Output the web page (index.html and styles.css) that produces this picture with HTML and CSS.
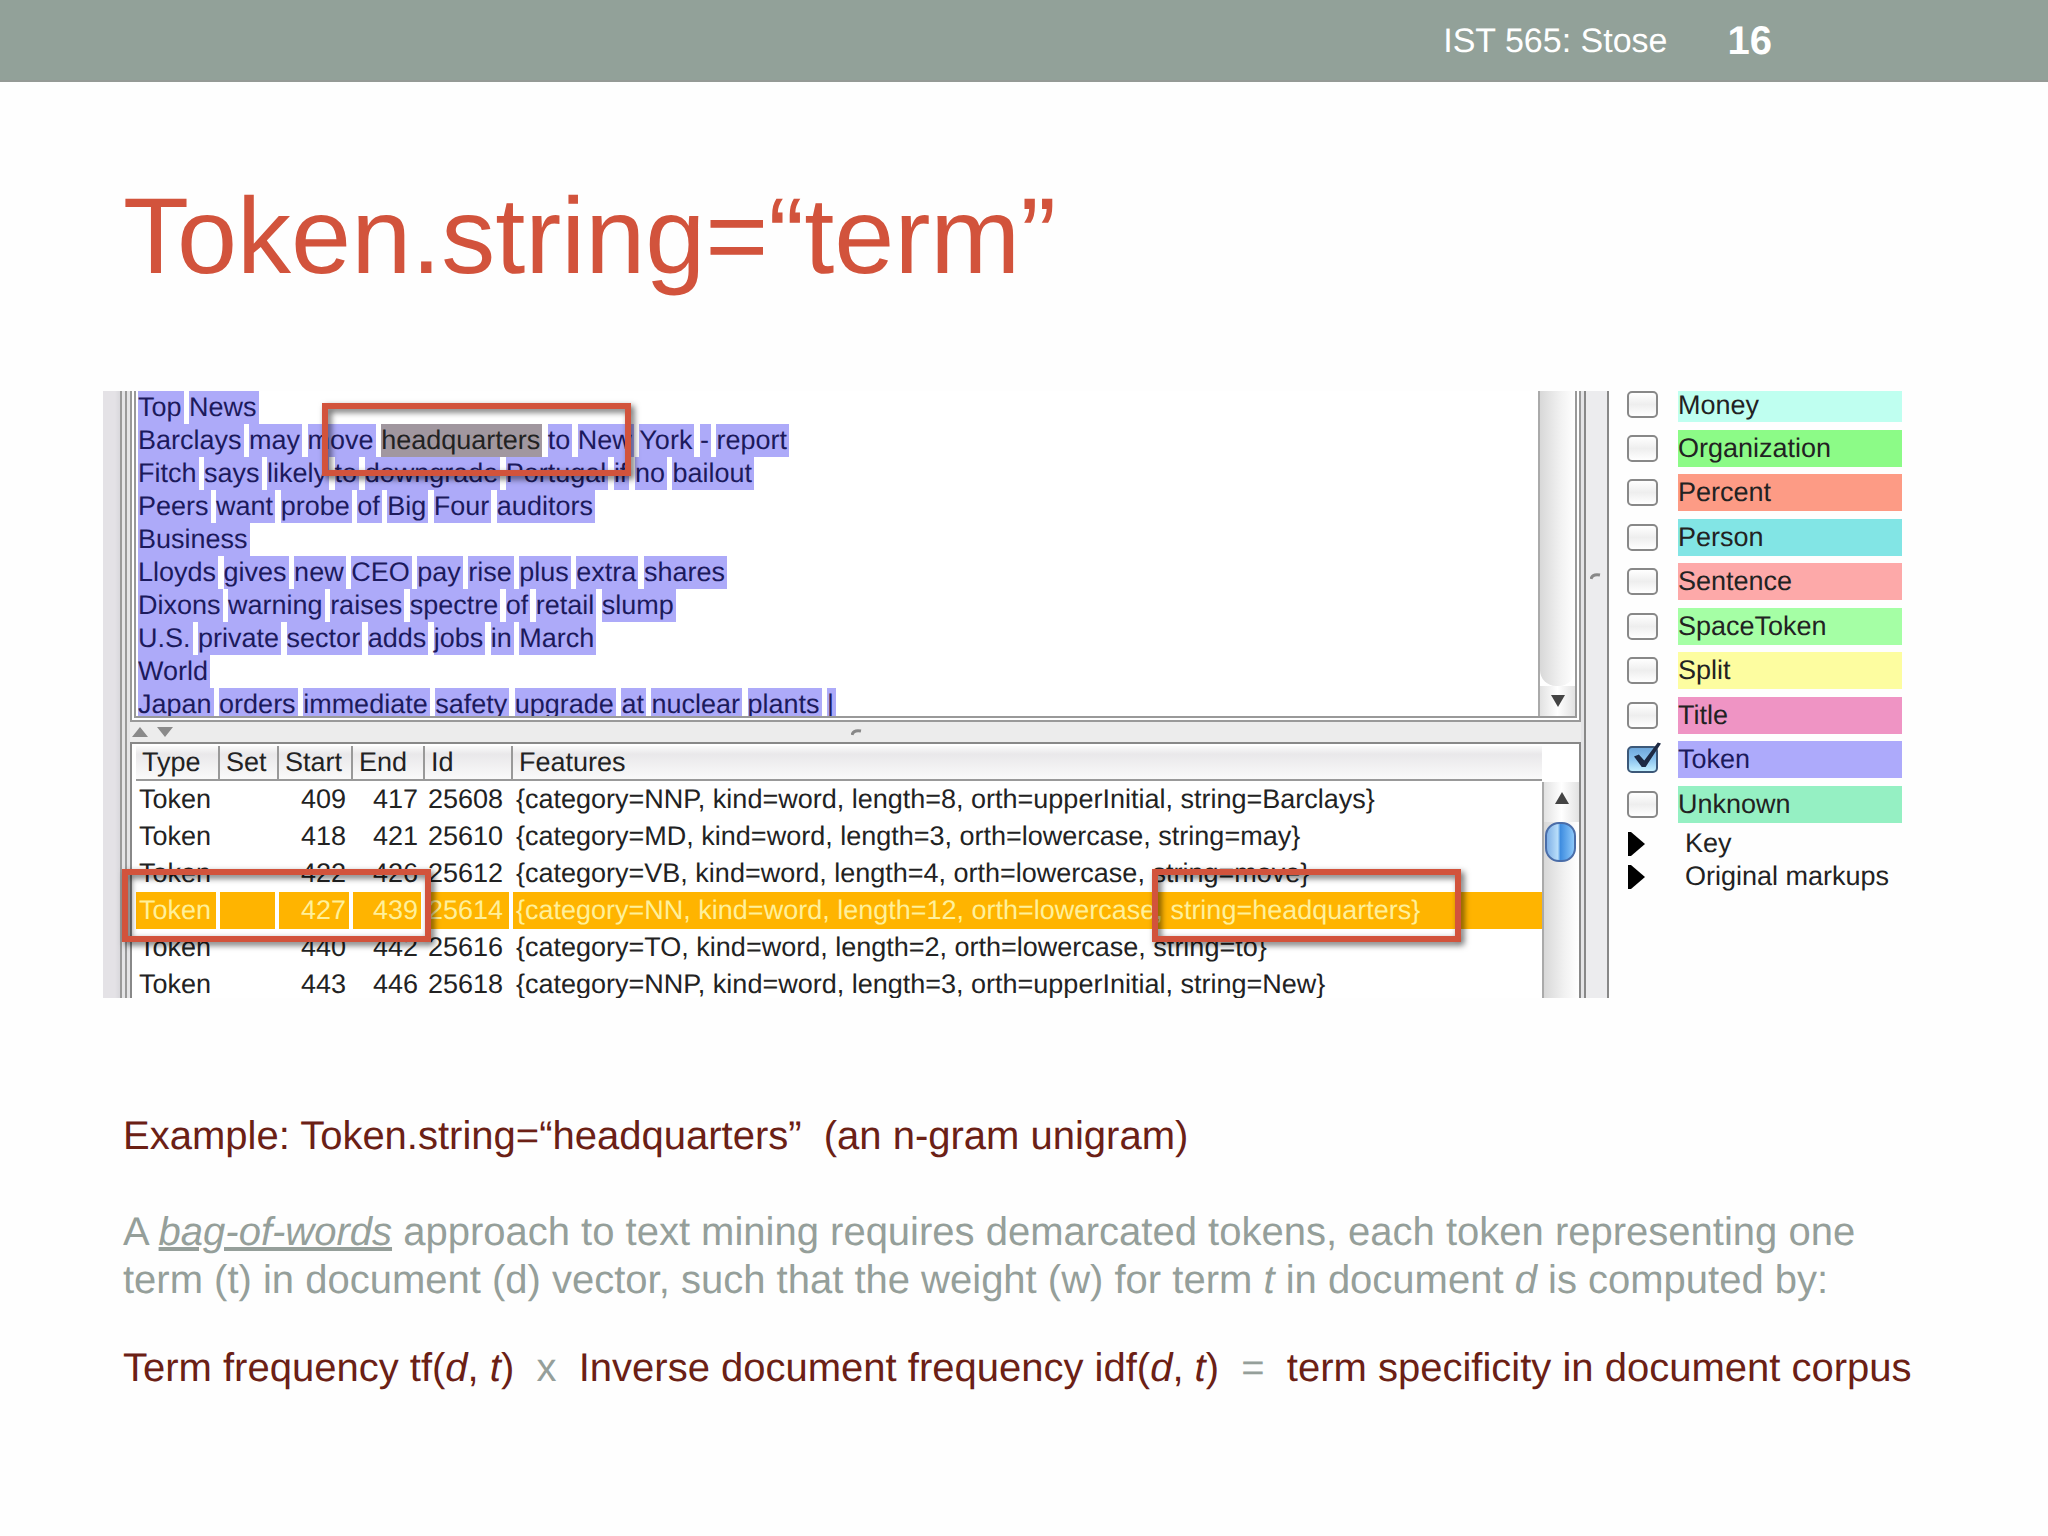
FILE: index.html
```html
<!DOCTYPE html>
<html lang="en">
<head>
    <meta charset="UTF-8">
    <meta name="viewport" content="width=device-width, initial-scale=1.0">
    <title>Token.string=“term”</title>
    <link rel="stylesheet" href="styles.css">
</head>
<body>
    <header class="slide-bar">
        <span class="course">IST 565: Stose</span>
        <span class="page-number">16</span>
    </header>

    <main>
        <h1>Token.string=“term”</h1>

        <section class="gate">
            <div class="left-edge"></div>

            <div class="document">
                <div class="editor">
                    <div class="editor-text">
                        <p><span>Top</span> <span>News</span></p>
                        <p><span>Barclays</span> <span>may</span> <span>move</span> <span class="picked">headquarters</span> <span>to</span> <span>New</span> <span>York</span> <span>-</span> <span>report</span></p>
                        <p><span>Fitch</span> <span>says</span> <span>likely</span> <span>to</span> <span>downgrade</span> <span>Portugal</span> <span>if</span> <span>no</span> <span>bailout</span></p>
                        <p><span>Peers</span> <span>want</span> <span>probe</span> <span>of</span> <span>Big</span> <span>Four</span> <span>auditors</span></p>
                        <p><span>Business</span></p>
                        <p><span>Lloyds</span> <span>gives</span> <span>new</span> <span>CEO</span> <span>pay</span> <span>rise</span> <span>plus</span> <span>extra</span> <span>shares</span></p>
                        <p><span>Dixons</span> <span>warning</span> <span>raises</span> <span>spectre</span> <span>of</span> <span>retail</span> <span>slump</span></p>
                        <p><span>U.S.</span> <span>private</span> <span>sector</span> <span>adds</span> <span>jobs</span> <span>in</span> <span>March</span></p>
                        <p><span>World</span></p>
                        <p><span>Japan</span> <span>orders</span> <span>immediate</span> <span>safety</span> <span>upgrade</span> <span>at</span> <span>nuclear</span> <span>plants</span> <span>|</span></p>
                    </div>
                    <div class="scrollbar">
                        <div class="track"></div>
                        <button class="arrow down" aria-label="Scroll down">
                            <svg width="14" height="12" viewBox="0 0 14 12"><path d="M0 0h14L7 12z" fill="#444"/></svg>
                        </button>
                    </div>
                </div>

                <div class="splitter">
                    <svg width="42" height="10" viewBox="0 0 42 10"><path d="M0 10L8 0l8 10zM25 0h16l-8 10z" fill="#8a8a8a"/></svg>
                    <svg width="11" height="7" viewBox="0 0 11 7"><path d="M1 6C2 2 5 1 10 2" fill="none" stroke="#888" stroke-width="3"/></svg>
                    <span></span>
                </div>

                <div class="annotations">
                    <table>
                        <thead>
                            <tr>
                                <th class="type">Type</th>
                                <th class="set">Set</th>
                                <th class="start">Start</th>
                                <th class="end">End</th>
                                <th class="id">Id</th>
                                <th class="features">Features</th>
                            </tr>
                        </thead>
                        <tbody>
                            <tr><td>Token</td><td></td><td class="num">409</td><td class="num">417</td><td>25608</td><td>{category=NNP, kind=word, length=8, orth=upperInitial, string=Barclays}</td></tr>
                            <tr><td>Token</td><td></td><td class="num">418</td><td class="num">421</td><td>25610</td><td>{category=MD, kind=word, length=3, orth=lowercase, string=may}</td></tr>
                            <tr><td>Token</td><td></td><td class="num">422</td><td class="num">426</td><td>25612</td><td>{category=VB, kind=word, length=4, orth=lowercase, string=move}</td></tr>
                            <tr class="selected"><td>Token</td><td></td><td class="num">427</td><td class="num">439</td><td>25614</td><td>{category=NN, kind=word, length=12, orth=lowercase, string=headquarters}</td></tr>
                            <tr><td>Token</td><td></td><td class="num">440</td><td class="num">442</td><td>25616</td><td>{category=TO, kind=word, length=2, orth=lowercase, string=to}</td></tr>
                            <tr><td>Token</td><td></td><td class="num">443</td><td class="num">446</td><td>25618</td><td>{category=NNP, kind=word, length=3, orth=upperInitial, string=New}</td></tr>
                        </tbody>
                    </table>
                    <div class="scrollbar">
                        <button class="arrow up" aria-label="Scroll up">
                            <svg width="14" height="12" viewBox="0 0 14 12"><path d="M0 12h14L7 0z" fill="#444"/></svg>
                        </button>
                        <div class="track"><div class="thumb"></div></div>
                    </div>
                </div>
            </div>

            <div class="divider">
                <svg width="11" height="7" viewBox="0 0 11 7"><path d="M1 6C2 2 5 1 10 2" fill="none" stroke="#888" stroke-width="3"/></svg>
            </div>

            <aside>
                <div class="types">
                    <div class="kind money"><input type="checkbox" id="money"><label for="money">Money</label></div>
                    <div class="kind organization"><input type="checkbox" id="organization"><label for="organization">Organization</label></div>
                    <div class="kind percent"><input type="checkbox" id="percent"><label for="percent">Percent</label></div>
                    <div class="kind person"><input type="checkbox" id="person"><label for="person">Person</label></div>
                    <div class="kind sentence"><input type="checkbox" id="sentence"><label for="sentence">Sentence</label></div>
                    <div class="kind space"><input type="checkbox" id="space"><label for="space">SpaceToken</label></div>
                    <div class="kind split"><input type="checkbox" id="split"><label for="split">Split</label></div>
                    <div class="kind title"><input type="checkbox" id="title"><label for="title">Title</label></div>
                    <div class="kind token"><input type="checkbox" id="token" checked><label for="token">Token</label></div>
                    <div class="kind unknown"><input type="checkbox" id="unknown"><label for="unknown">Unknown</label></div>
                </div>
                <div class="group">
                    <svg width="17" height="24" viewBox="0 0 17 24"><path d="M0 0l3 0L17 12 3 24H0z"/></svg>
                    <span>Key</span>
                </div>
                <div class="group">
                    <svg width="17" height="24" viewBox="0 0 17 24"><path d="M0 0l3 0L17 12 3 24H0z"/></svg>
                    <span>Original markups</span>
                </div>
            </aside>

            <!-- Red frames laid over the tool window -->
            <div class="callout callout-word"></div>
            <div class="callout callout-offsets"></div>
            <div class="callout callout-string"></div>
        </section>

        <section class="notes">
            <p class="example">Example: Token.string=“headquarters” &nbsp;(an n-gram unigram)</p>
            <p class="explain">A <em class="underlined">bag-of-words</em> approach to text mining requires demarcated tokens, each token representing one term (t) in document (d) vector, such that the weight (w) for term <em>t</em> in document <em>d</em> is computed by:</p>
            <p class="formula">Term frequency tf(<em>d</em>, <em>t</em>) &nbsp;<span>x</span>&nbsp; Inverse document frequency idf(<em>d</em>, <em>t</em>) &nbsp;<span>=</span>&nbsp; term specificity in document corpus</p>
        </section>
    </main>
</body>
</html>
```
FILE: styles.css
```css
* {
    box-sizing: border-box;
}

body {
    font-family: "Liberation Sans", Arial, sans-serif;
    background-color: #fefefe;
    margin: 0;
    text-rendering: geometricPrecision;
}

.slide-bar {
    display: flex;
    justify-content: flex-end;
    align-items: center;
    gap: 60px;
    height: 82px;
    padding-top: 3px;
    padding-right: 276px;
    background-color: #92a199;
    border-bottom: 2px solid #959a96;
    color: white;
}

.course {
    font-size: 34px;
}

.page-number {
    font-size: 40px;
    font-weight: bold;
}

main {
    padding: 0 146px 0 103px;
}

h1 {
    margin: 92px 0 0 20px;
    font-size: 108px;
    line-height: 124px;
    font-weight: normal;
    color: #d2533c;
}

/* Tool window */
.gate {
    position: relative;
    display: grid;
    grid-template-columns: 27px 1fr 28px 293px;
    margin-top: 93px;
    font-size: 27px;
    color: #222;
}

.left-edge {
    background: linear-gradient(to right, #e4e2e6 12px, #d9d8dc 17px, #999 17px, #999 19px, #e4e4e6 19px, #e4e4e6 22px, #999 22px, #999 24px, #e4e4e6 24px);
}

.document {
    min-width: 0;
}

.editor {
    display: flex;
    height: 331px;
    border: 6px double #999;
    border-top: none;
    background-color: white;
}

.editor-text {
    flex: 1;
    padding-left: 2px;
    overflow: hidden;
    color: #1c1a5c;
    white-space: nowrap;
}

.editor-text p {
    margin: 0;
    height: 33px;
    line-height: 33px;
}

.editor-text span {
    display: inline-block;
    height: 33px;
    padding-right: 2px;
    margin-right: -2px;
    background-color: #adaaf9;
}

.editor-text .picked {
    background-color: #a1979f;
    color: #222;
}

.scrollbar {
    display: flex;
    flex-direction: column;
    width: 37px;
    border-left: 2px solid #aaa;
}

.track {
    flex: 1;
    background: linear-gradient(to right, #d8d8d8, #f2f2f2 60%, #fff);
}

.editor .track {
    border-radius: 0 0 16px 16px;
}

.arrow {
    display: flex;
    justify-content: center;
    align-items: center;
    height: 30px;
    padding: 0;
    border: none;
    background: linear-gradient(to right, #e2e2e2, #fff 50%, #e2e2e2);
}

.arrow.up {
    height: 40px;
    padding-bottom: 8px;
}

.splitter {
    display: flex;
    justify-content: space-between;
    align-items: center;
    height: 20px;
    padding-left: 2px;
    background-color: #ececec;
}

.splitter span {
    width: 42px;
}

.annotations {
    display: flex;
    height: 256px;
    padding: 2px 0 0 4px;
    overflow: hidden;
    border: 2px solid #888;
    border-bottom: none;
    background-color: white;
}

.annotations table {
    flex: 1;
    table-layout: fixed;
    border-spacing: 0;
    white-space: nowrap;
}

.annotations th {
    height: 35px;
    padding: 0 0 0 6px;
    border-right: 2px solid #999;
    border-bottom: 2px solid #999;
    background: linear-gradient(#fafafa, #e9e8ea 25%, #fafafa);
    font-weight: normal;
    text-align: left;
}

.annotations th:last-child {
    border-right: none;
}

.type { width: 84px; }
.set { width: 59px; }
.start { width: 74px; }
.end { width: 72px; }
.id { width: 88px; }

.annotations td {
    height: 37px;
    padding: 0 3px;
    border-right: 4px solid white;
    background-clip: padding-box;
}

.annotations td:last-child {
    border-right: none;
}

.annotations .num {
    text-align: right;
}

.selected td {
    background-color: #ffb400;
    color: #fff09a;
}

.annotations .scrollbar {
    margin-top: 36px;
}

.thumb {
    width: 31px;
    height: 40px;
    margin-left: 1px;
    border: 2px solid #4a6da8;
    border-radius: 14px;
    background: linear-gradient(to right, #7fb0e6, #b9defa 40%, #3f8de0 50%, #8cc8fa);
}

.divider {
    display: flex;
    justify-content: center;
    align-items: center;
    padding-bottom: 236px;
    background: linear-gradient(to right, #e4e4e6 3px, #888 3px, #888 5px, #ececee 5px, #ececee 26px, #888 26px);
}

/* Annotation types */
aside {
    padding-left: 18px;
}

.types {
    display: flex;
    flex-direction: column;
    justify-content: space-between;
    height: 432px;
    margin-bottom: 4px;
}

.kind {
    display: flex;
    align-items: center;
    justify-content: space-between;
}

.kind label {
    width: 224px;
    height: 37px;
    line-height: 37px;
}

.kind.money {
    align-items: flex-start;
}

.money label {
    height: 31px;
    line-height: 28px;
    background-color: #bffff0;
}

.organization label { background-color: #8cfb87; }
.percent label { background-color: #fd9b85; }
.person label { background-color: #82e5e5; }
.sentence label { background-color: #fda9a9; }
.space label { background-color: #a5ffa5; }
.split label { background-color: #fdfda0; }
.title label { background-color: #ef94c4; }
.token label { background-color: #adaafb; color: #1c1a5c; }
.unknown label { background-color: #95f0c3; }

.kind input {
    position: relative;
    appearance: none;
    width: 31px;
    height: 27px;
    margin: 0;
    border: 2px solid #888;
    border-radius: 5px;
    background: linear-gradient(#fff, #eee 50%, #fff);
}

.kind input:checked {
    border-color: #3c5878;
    background: linear-gradient(#6fa8dc, #8cc4ee 50%, #c4f0ff);
}

.kind input:checked::after {
    content: "";
    position: absolute;
    left: 5px;
    top: -6px;
    width: 27px;
    height: 25px;
    background-color: #1d2a44;
    clip-path: polygon(0 56%, 18% 48%, 38% 72%, 88% 0, 100% 4%, 42% 100%, 30% 100%);
}

.group {
    display: flex;
    align-items: center;
    gap: 40px;
    height: 33px;
    padding-left: 1px;
}

.callout {
    position: absolute;
    width: 309px;
    height: 73px;
    border: 6px solid #d2533c;
    filter: drop-shadow(3px 3px 3px rgba(0, 0, 0, 0.6));
}

.callout-word {
    left: 219px;
    top: 12px;
}

.callout-offsets {
    left: 19px;
    top: 478px;
}

.callout-string {
    left: 1049px;
    top: 478px;
}

/* Notes under the window */
.notes {
    margin: 114px 0 0 20px;
    font-size: 40px;
    line-height: 48px;
}

.notes p {
    margin: 0;
}

.example,
.formula {
    color: #6b2015;
}

.notes .explain {
    margin: 48px 0 40px;
    color: #959f9a;
}

.underlined {
    text-decoration: underline;
}

.formula {
    white-space: nowrap;
}

.formula span {
    color: #959f9a;
}
```
